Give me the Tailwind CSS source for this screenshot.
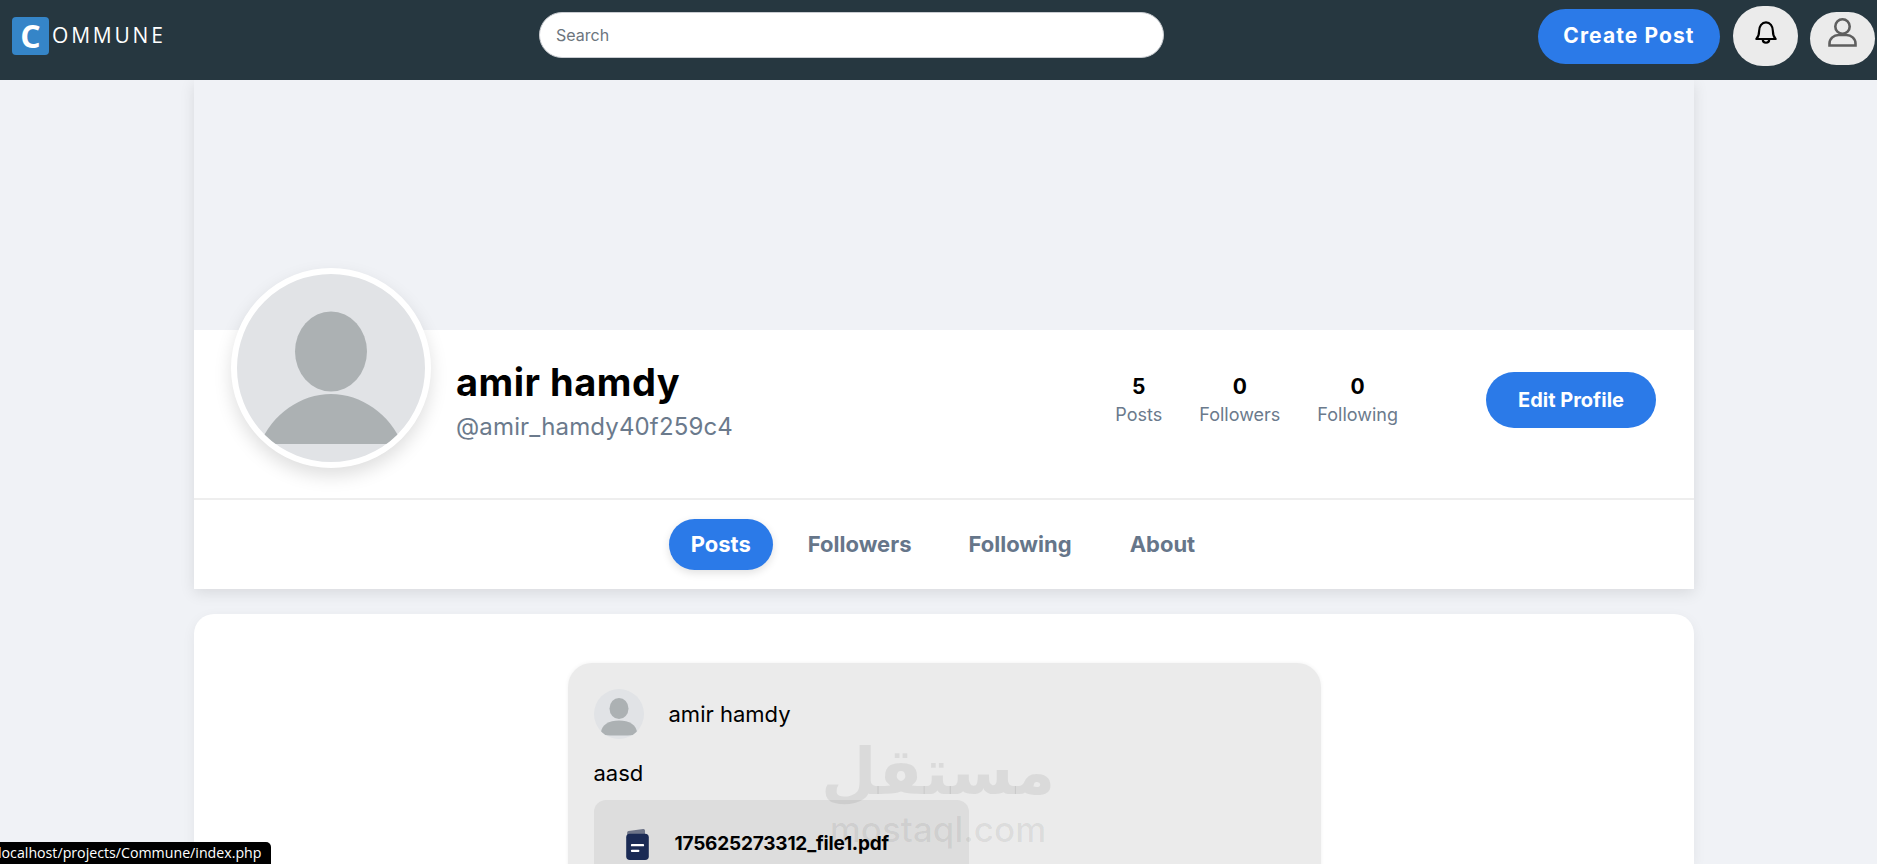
<!DOCTYPE html>
<html lang="en"><head><meta charset="utf-8"><title>Commune</title>
<script src="https://cdn.jsdelivr.net/npm/@tailwindcss/browser@4"></script></head>
<body class="relative h-[864px] overflow-hidden bg-[#f0f2f6] font-['Inter','Noto_Sans',sans-serif]">
<header class="relative z-10 flex h-20 items-center bg-[#263740] pr-0.5 pb-2 pl-3">
  <div class="flex w-[527px] items-center">
    <div class="flex h-[38px] w-[37px] items-center justify-center rounded-[4px] bg-[#3585c8] font-['Open_Sans',sans-serif] text-[32px] leading-none font-bold text-white">C</div>
    <span class="ml-[3px] font-['Open_Sans',sans-serif] text-[21px] font-normal tracking-[2.8px] text-white">OMMUNE</span>
  </div>
  <div class="-mt-0.5 flex h-[46px] w-[625px] items-center rounded-full border border-[#c9ccd1] bg-white px-4 text-[16px] text-[#6c757d]">Search</div>
  <div class="ml-auto flex items-center">
    <button class="flex h-[55px] w-[182px] items-center justify-center rounded-full bg-[#2b7ae8] text-[21px] font-bold tracking-[1.1px] text-white">Create Post</button>
    <div class="ml-[13px] flex h-[60px] w-[65px] items-center justify-center rounded-full bg-[#ebebeb]">
      <svg class="mb-2" width="26" height="28" viewBox="0 0 24 26" fill="none" stroke="#000" stroke-width="2" stroke-linejoin="round"><path d="M3 19.500c2-2 2.600-3.600 2.600-7.500 0-4.400 2.600-8 6.400-8s6.400 3.600 6.400 8c0 3.900.6 5.500 2.600 7.500z"/><path d="M9 20c0 4 6 4 6 0"/></svg>
    </div>
    <div class="mt-[5px] ml-3 flex h-[53px] w-[65px] items-center justify-center rounded-full bg-[#ebebeb]">
      <svg class="mb-3" width="29" height="29" viewBox="0 0 29 29" fill="none" stroke="#5f5f5f" stroke-width="2.600"><circle cx="14.500" cy="8.500" r="7.200"/><path d="M1.500 27.500v-2c0-5 4.500-8.500 9-8.500h8c4.500 0 9 3.500 9 8.500v2z"/></svg>
    </div>
  </div>
</header>
<main class="ml-[194px] h-[784px] w-[1500px] pb-0">
  <section class="bg-white shadow-[0_4px_14px_rgba(0,0,0,0.1)]">
    <div class="h-[250px] bg-[#f0f2f6]"></div>
    <div class="flex h-[170px] items-center border-b-2 border-[#eeeeee] pr-[38px] pb-[27px] pl-[37px]">
      <div class="relative -mt-[93px] -mb-[27px] h-[200px] w-[200px] shrink-0 overflow-hidden rounded-full border-[6px] border-white bg-[#e1e3e6] shadow-[0_8px_18px_rgba(0,0,0,0.13)]">
        <svg class="absolute top-0 left-0" width="188" height="188" viewBox="0 0 188 188"><ellipse cx="94" cy="77.500" rx="36" ry="40" fill="#acb1b3"/><path d="M23 170c12-30 41-50 71-50s59 20 71 50z" fill="#acb1b3"/></svg>
      </div>
      <div class="ml-[25px]">
        <h1 class="text-[38px] leading-[46px] font-bold tracking-[0.5px] text-black">amir hamdy</h1>
        <p class="mt-1.5 text-[24px] leading-8 tracking-[0.15px] text-[#6b7a8c]">@amir_hamdy40f259c4</p>
      </div>
      <div class="ml-auto flex items-center gap-[37px] text-center">
        <div><div class="text-[21px] leading-7 font-bold text-black">5</div><div class="text-[18px] leading-7 text-[#6b7a8c]">Posts</div></div>
        <div><div class="text-[21px] leading-7 font-bold text-black">0</div><div class="text-[18px] leading-7 text-[#6b7a8c]">Followers</div></div>
        <div><div class="text-[21px] leading-7 font-bold text-black">0</div><div class="text-[18px] leading-7 text-[#6b7a8c]">Following</div></div>
      </div>
      <button class="-mt-0.5 ml-[88px] h-[56px] w-[170px] shrink-0 rounded-full bg-[#2b7ae8] text-[20px] font-bold text-white">Edit Profile</button>
    </div>
    <nav class="flex h-[89px] items-center justify-center pr-[24px] text-[22px] font-bold text-[#66768a]">
      <span class="mr-[35px] flex h-[51px] w-[104px] items-center justify-center rounded-full bg-[#2b7ae8] text-white shadow-[0_3px_8px_rgba(0,0,0,0.12)]">Posts</span>
      <span class="mr-[57px]">Followers</span>
      <span class="mr-[58px]">Following</span>
      <span>About</span>
    </nav>
  </section>
  <section class="mt-[25px] h-[250px] overflow-hidden rounded-t-[20px] bg-white pt-[49px] shadow-[0_4px_14px_rgba(0,0,0,0.06)]">
    <article class="mx-auto h-[400px] w-[753px] rounded-[24px] bg-[#ebebeb] px-[26px] pt-[26px] shadow-[0_0_4px_rgba(0,0,0,0.06)]">
      <div class="flex items-center">
        <div class="relative h-[50px] w-[50px] overflow-hidden rounded-full bg-[#e1e3e6]">
          <svg class="absolute top-0 left-0" width="50" height="50" viewBox="0 0 50 50"><ellipse cx="25" cy="19.500" rx="9.500" ry="10.500" fill="#acb1b3"/><path d="M7 44c0-8 8-12.500 18-12.500S43 36 43 44c0 2-4 2.500-18 2.500S7 46 7 44z" fill="#acb1b3"/></svg>
        </div>
        <span class="ml-[25px] text-[22px] text-black">amir hamdy</span>
      </div>
      <p class="mt-5 text-[22px] leading-7 text-black">aasd</p>
      <div class="mt-[13px] flex h-[120px] w-[375px] items-start rounded-[12px] bg-[#dddddd] pt-7 pl-[31px]">
        <svg width="25" height="32" viewBox="0 0 26 34"><path d="M2 8 2 5q0-1.500 1.500-1.700L19 1q2-.3 2 2v4z" fill="#6d7488"/><rect x="1" y="6" width="24" height="28" rx="4" fill="#1a2a54"/><rect x="6" y="17" width="14" height="2.500" rx="1" fill="#fff"/><rect x="6" y="23" width="9" height="2.500" rx="1" fill="#fff"/></svg>
        <span class="mt-0.5 ml-[25px] text-[19px] font-bold tracking-[-0.2px] text-black">175625273312_file1.pdf</span>
      </div>
    </article>
  </section>
</main>
<div aria-hidden="true" class="absolute top-[734px] left-[823px] z-10 flex w-[230px] flex-col items-center text-[#000]/[0.07]">
  <span class="font-['DejaVu_Sans',sans-serif] text-[64px] leading-[76px] font-bold" dir="rtl">مستقل</span>
  <span class="text-[35px] leading-[38px] font-medium">mostaql.com</span>
</div>
<div class="absolute bottom-0 left-0 z-20 flex h-[22px] w-[271px] items-center overflow-hidden rounded-tr-[5px] bg-black font-['Open_Sans',sans-serif] text-[14.200px] whitespace-nowrap text-white"><span class="-ml-0.5">localhost/projects/Commune/index.php</span></div>
</body></html>
